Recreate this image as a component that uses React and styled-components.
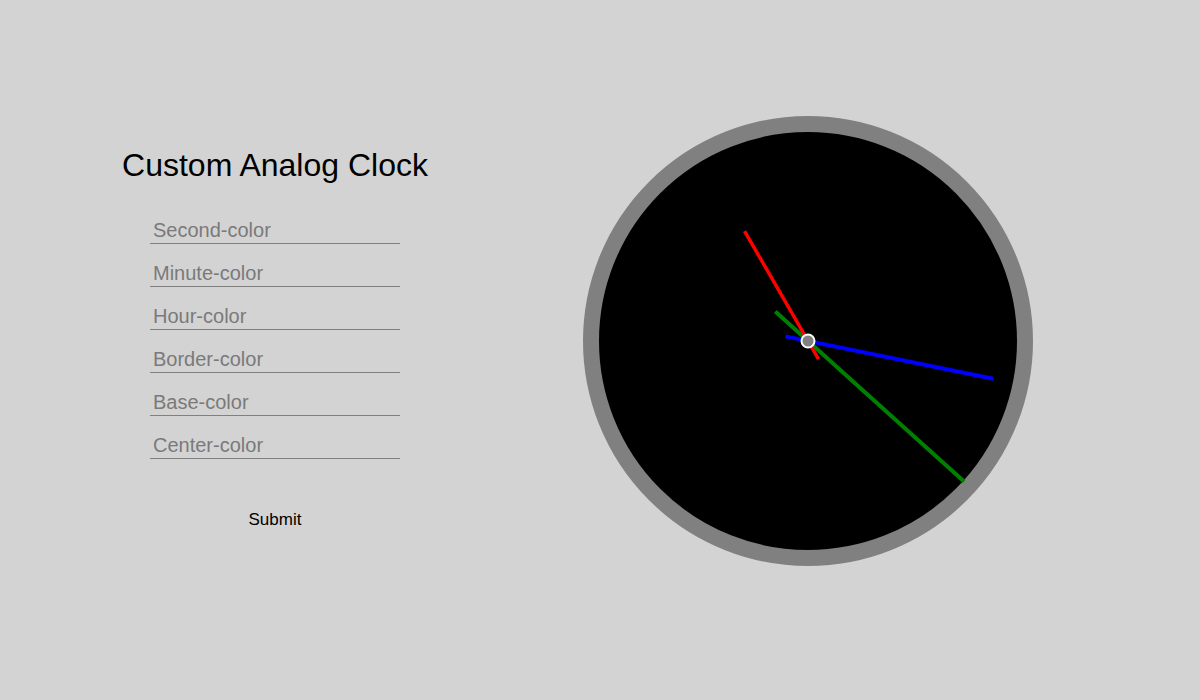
import React from "react";
import styled, { createGlobalStyle } from "styled-components";

const Global = createGlobalStyle`
  html, body { margin: 0; padding: 0; background: #d3d3d3; }
  body { font-family: "Liberation Sans", Arial, sans-serif; }
  * { box-sizing: border-box; }
`;

const Page = styled.main`
  display: flex;
  align-items: flex-start;
  width: 1200px;
  height: 700px;
  background: #d3d3d3;
`;

const Panel = styled.section`
  width: 550px;
  padding-top: 147px;
  display: flex;
  flex-direction: column;
  align-items: center;
`;

const Title = styled.h1`
  margin: 0 0 32px;
  font-family: "Liberation Sans", Arial, sans-serif;
  font-size: 32px;
  font-weight: 400;
  line-height: 37px;
  color: #000;
`;

const Form = styled.form`
  display: flex;
  flex-direction: column;
  align-items: center;
  gap: 15px;
`;

const Field = styled.input`
  width: 250px;
  padding: 3px 3px 1px;
  border: none;
  border-bottom: 1px solid #808080;
  background: transparent;
  outline: none;
  font-family: "Liberation Sans", Arial, sans-serif;
  font-size: 20px;
  line-height: 23px;
  color: #000;
  &::placeholder {
    font-family: "Liberation Sans", Arial, sans-serif;
    color: #7a7a7a;
    opacity: 1;
  }
`;

const SubmitButton = styled.button`
  margin-top: 35px;
  padding: 1px 6px;
  border: none;
  background: transparent;
  font-family: "Liberation Sans", Arial, sans-serif;
  font-size: 17px;
  line-height: 19px;
  color: #000;
  cursor: pointer;
`;

const ClockWrap = styled.section`
  margin-top: 116px;
  margin-left: 33px;
`;

const Dial = styled.div`
  position: relative;
  width: 450px;
  height: 450px;
  border-radius: 50%;
  border: 16px solid ${(p) => p.$border};
  background: ${(p) => p.$base};
`;

const HandsLayer = styled.svg`
  position: absolute;
  inset: 0;
  width: 418px;
  height: 418px;
  overflow: visible;
`;

const hands = [
  { angle: 132, length: 210, tail: 44, width: 4, color: "#008000" },
  { angle: 101.5, length: 189, tail: 23, width: 4, color: "#0000ff" },
  { angle: 330, length: 127, tail: 21, width: 3.5, color: "#ff0000" },
];

const Hand = ({ angle, length, tail, width, color }) => (
  <line
    x1="0"
    y1={tail}
    x2="0"
    y2={-length}
    stroke={color}
    strokeWidth={width}
    transform={`rotate(${angle})`}
  />
);

const fields = [
  "Second-color",
  "Minute-color",
  "Hour-color",
  "Border-color",
  "Base-color",
  "Center-color",
];

export default function App() {
  return (
    <>
      <Global />
      <Page>
        <Panel>
          <Title>Custom Analog Clock</Title>
          <Form onSubmit={(e) => e.preventDefault()}>
            {fields.map((f) => (
              <Field key={f} type="text" placeholder={f} />
            ))}
            <SubmitButton type="submit">Submit</SubmitButton>
          </Form>
        </Panel>
        <ClockWrap>
          <Dial $border="#808080" $base="#000">
            <HandsLayer viewBox="-209 -209 418 418">
              {hands.map((h, i) => (
                <Hand key={i} {...h} />
              ))}
              <circle cx="0" cy="0" r="6.5" fill="#808080" stroke="#fff" strokeWidth="2" />
            </HandsLayer>
          </Dial>
        </ClockWrap>
      </Page>
    </>
  );
}
